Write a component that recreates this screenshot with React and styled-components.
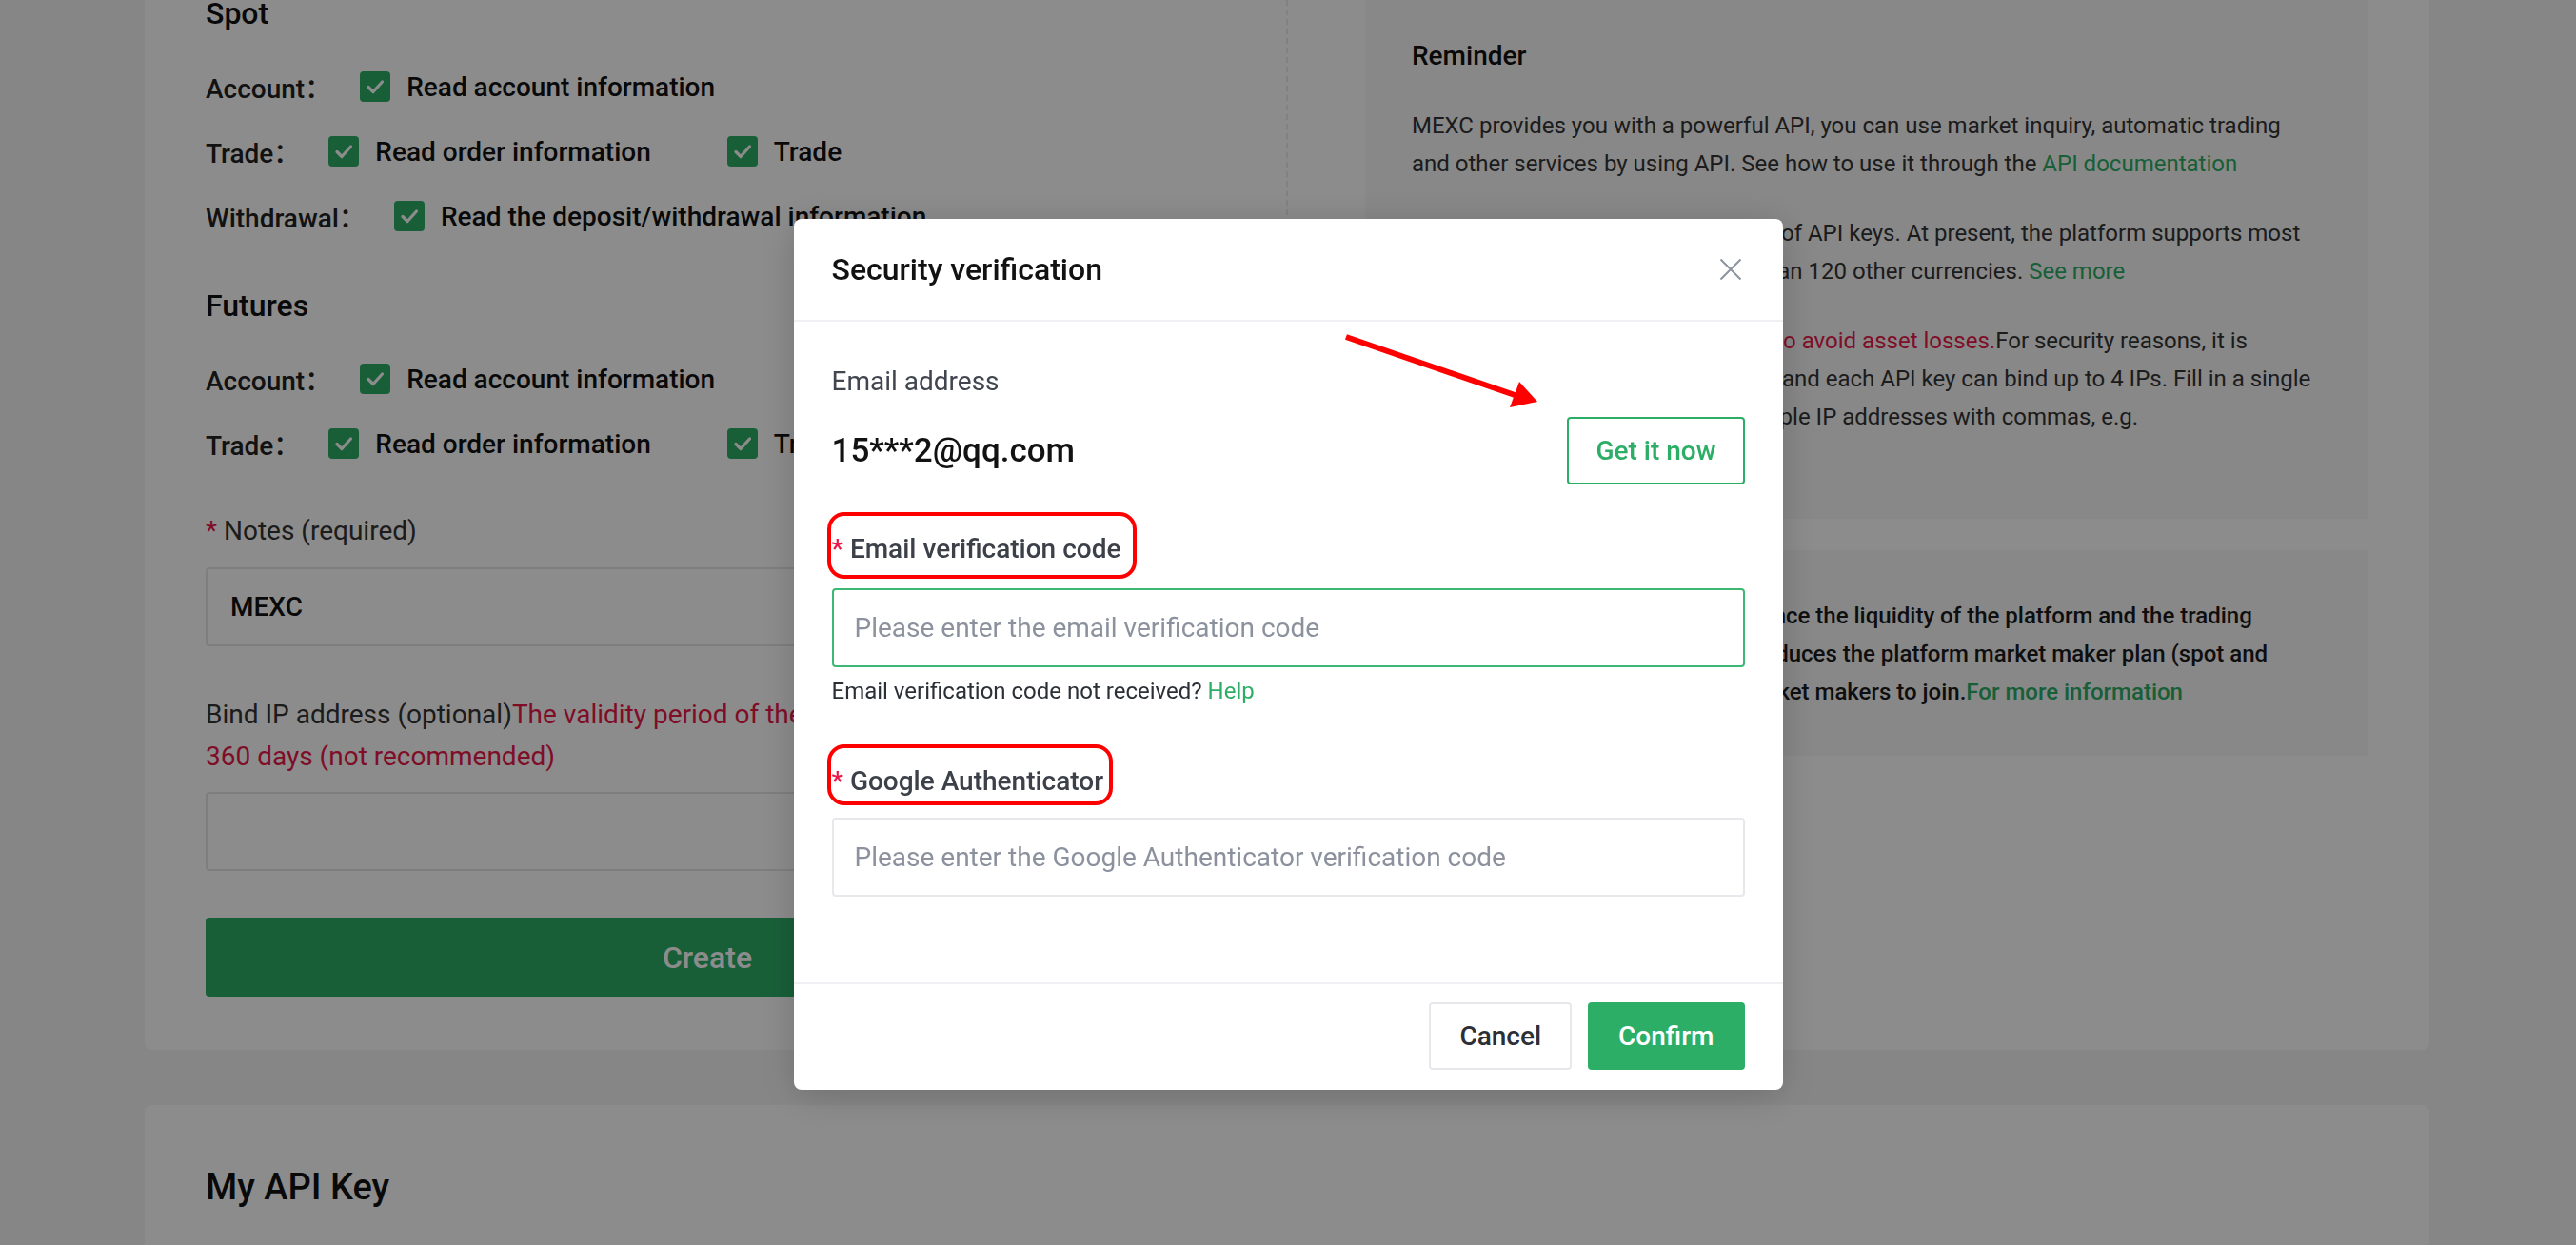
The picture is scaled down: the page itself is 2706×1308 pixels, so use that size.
import styled, { createGlobalStyle } from "styled-components";

const GREEN = "#2dae67";
const RED = "#e8194a";

const GlobalStyle = createGlobalStyle`
  * { box-sizing: border-box; }
  html, body { margin: 0; padding: 0; }
  body {
    background: #f5f5f5;
    font-family: Roboto, "Noto Sans CJK SC", sans-serif;
    color: #121212;
    overflow: hidden;
  }
`;

function Check() {
  return (
    <svg width="32" height="32" viewBox="0 0 32 32">
      <path
        d="M9 16.5 L14 21.5 L23.5 11"
        fill="none"
        stroke="#fff"
        strokeWidth="3.2"
        strokeLinecap="round"
        strokeLinejoin="round"
      />
    </svg>
  );
}

function Option({ children }) {
  return (
    <OptionItem>
      <CheckBox>
        <Check />
      </CheckBox>
      {children}
    </OptionItem>
  );
}

export default function App() {
  return (
    <>
      <GlobalStyle />
      <Page>
        <Card>
          <LeftCol>
            <Section>
              <SectionTitle>Spot</SectionTitle>
              <PermRow>
                <RowLabel>Account：</RowLabel>
                <Option>Read account information</Option>
              </PermRow>
              <PermRow>
                <RowLabel>Trade：</RowLabel>
                <Option>Read order information</Option>
                <Option>Trade</Option>
              </PermRow>
              <PermRow>
                <RowLabel>Withdrawal：</RowLabel>
                <Option>Read the deposit/withdrawal information</Option>
              </PermRow>
            </Section>
            <Section>
              <SectionTitle>Futures</SectionTitle>
              <PermRow>
                <RowLabel>Account：</RowLabel>
                <Option>Read account information</Option>
              </PermRow>
              <PermRow>
                <RowLabel>Trade：</RowLabel>
                <Option>Read order information</Option>
                <Option>Trade</Option>
              </PermRow>
            </Section>

            <Field>
              <FormLabel>
                <Star>*</Star> Notes (required)
              </FormLabel>
              <PageInput value="MEXC" readOnly />
            </Field>

            <Field $gap="50px">
              <FormLabel $tall>
                Bind IP address (optional)
                <Warn>
                  The validity period of the API Key not bound to IP is
                  <br />
                  360 days (not recommended)
                </Warn>
              </FormLabel>
              <PageInput />
            </Field>

            <CreateButton>Create</CreateButton>
          </LeftCol>

          <Divider />

          <RightCol>
            <InfoBox>
              <InfoTitle>Reminder</InfoTitle>
              <InfoText>
                MEXC provides you with a powerful API, you can use market inquiry, automatic trading
                <br />
                and other services by using API. See how to use it through the{" "}
                <Link>API documentation</Link>
              </InfoText>
              <InfoText>
                Each user can create up to 5 groups of API keys. At present, the platform supports most
                <br />
                mainstream currencies, and more than 120 other currencies. <Link>See more</Link>
              </InfoText>
              <InfoText>
                <WarnText>Please don't disclose your API Keys to avoid asset losses.</WarnText>
                For security reasons, it is
                <br />
                recommended to bind IP addresses, and each API key can bind up to 4 IPs. Fill in a single
                <br />
                IP address directly, or separate multiple IP addresses with commas, e.g.
                <br />
                192.168.1.1,192.168.1.2
              </InfoText>
            </InfoBox>
            <InfoBox $strong>
              <InfoText $first>
                In order to improve depth, and enhance the liquidity of the platform and the trading
                <br />
                experience for all users, MEXC introduces the platform market maker plan (spot and
                <br />
                futures). We sincerely welcome market makers to join.<Link>For more information</Link>
              </InfoText>
            </InfoBox>
          </RightCol>
        </Card>

        <KeyCard>
          <KeyTitle>My API Key</KeyTitle>
        </KeyCard>
      </Page>

      <Overlay>
        <Modal>
          <ModalHeader>
            <ModalTitle>Security verification</ModalTitle>
            <CloseButton aria-label="Close">
              <svg width="24" height="24" viewBox="0 0 24 24">
                <path d="M1.5 1.5 L22.5 22.5 M22.5 1.5 L1.5 22.5" stroke="#8b939c" strokeWidth="2" fill="none" />
              </svg>
            </CloseButton>
          </ModalHeader>

          <ModalBody>
            <FieldLabel>Email address</FieldLabel>
            <ValueRow>
              <EmailValue>15***2@qq.com</EmailValue>
              <OutlineButton>Get it now</OutlineButton>
            </ValueRow>

            <Marked $top="50px" $below="23px">
              <Star>*</Star> Email verification code
            </Marked>
            <ModalInput $active placeholder="Please enter the email verification code" />
            <HelpLine>
              Email verification code not received? <Link>Help</Link>
            </HelpLine>

            <Marked $top="61px" $right="-10px" $bottom="-7px">
              <Star>*</Star> Google Authenticator
            </Marked>
            <ModalInput placeholder="Please enter the Google Authenticator verification code" />
          </ModalBody>

          <ModalFooter>
            <GhostButton>Cancel</GhostButton>
            <PrimaryButton>Confirm</PrimaryButton>
          </ModalFooter>

          <Arrow width="230" height="100" viewBox="0 0 230 100">
            <line x1="10" y1="14" x2="190" y2="76" stroke="#ff0000" strokeWidth="6" />
            <polygon points="211,82 192,61 182,88" fill="#ff0000" />
          </Arrow>
        </Modal>
      </Overlay>
    </>
  );
}

const Page = styled.div`
  margin-top: -50px;
  padding: 0 154px 0 152px;
  display: flex;
  flex-direction: column;
  gap: 58px;
`;

const Card = styled.div`
  background: #fff;
  border-radius: 8px;
  padding: 40px 64px 56px;
  display: grid;
  grid-template-columns: 1fr 2px 1fr;
  column-gap: 81px;
`;

const LeftCol = styled.div`
  display: flex;
  flex-direction: column;
  padding-top: 4px;
`;

const Section = styled.div`
  display: flex;
  flex-direction: column;
  gap: 28px;

  & + & {
    margin-top: 54px;
  }
`;

const SectionTitle = styled.div`
  font-size: 32px;
  font-weight: 500;
  line-height: 40px;
  margin-bottom: 9px;
  color: #121212;
`;

const PermRow = styled.div`
  display: flex;
  align-items: center;
  height: 40px;
`;

const RowLabel = styled.span`
  font-size: 28px;
  font-weight: 500;
  color: #222;
  margin-right: 30px;
`;

const OptionItem = styled.span`
  display: inline-flex;
  align-items: center;
  gap: 17px;
  margin-right: 80px;
  font-size: 28px;
  font-weight: 500;
  color: #121212;
  white-space: nowrap;
`;

const CheckBox = styled.span`
  width: 32px;
  height: 32px;
  border-radius: 4px;
  background: ${GREEN};
  display: inline-flex;
`;

const Field = styled.div`
  display: flex;
  flex-direction: column;
  margin-top: ${(p) => p.$gap || "54px"};
`;

const FormLabel = styled.div`
  font-size: 28px;
  line-height: ${(p) => (p.$tall ? "44px" : "36px")};
  color: #333;
  margin-bottom: ${(p) => (p.$tall ? "15px" : "20px")};
  white-space: nowrap;
`;

const Star = styled.span`
  color: ${RED};
`;

const Warn = styled.span`
  color: ${RED};
`;

const PageInput = styled.input`
  height: 83px;
  border: 2px solid #e6e6e6;
  border-radius: 4px;
  padding: 0 24px;
  font-family: inherit;
  font-size: 28px;
  font-weight: 500;
  color: #121212;
  outline: none;
`;

const CreateButton = styled.button`
  margin-top: 49px;
  height: 83px;
  border: none;
  border-radius: 4px;
  background: ${GREEN};
  color: #fff;
  font-family: inherit;
  font-size: 32px;
  font-weight: 500;
`;

const Divider = styled.div`
  border-left: 2px dashed #ebebeb;
`;

const RightCol = styled.div`
  display: flex;
  flex-direction: column;
  gap: 33px;
  align-self: start;
`;

const InfoBox = styled.div`
  background: #f7f7f8;
  padding: 49px 49px 47px;
  color: ${(p) => (p.$strong ? "#1a1a1a" : "#333")};
  font-weight: ${(p) => (p.$strong ? 500 : 400)};
`;

const InfoTitle = styled.div`
  font-size: 28px;
  font-weight: 500;
  line-height: 40px;
  color: #121212;
`;

const InfoText = styled.p`
  margin: ${(p) => (p.$first ? "0" : "33px 0 0")};
  font-size: 24px;
  line-height: 40px;
  white-space: nowrap;
`;

const Link = styled.span`
  color: ${GREEN};
`;

const WarnText = styled.span`
  color: ${RED};
`;

const KeyCard = styled.div`
  background: #fff;
  border-radius: 8px;
  padding: 62px 64px;
  min-height: 400px;
`;

const KeyTitle = styled.div`
  font-size: 38px;
  font-weight: 500;
  line-height: 48px;
`;

const Overlay = styled.div`
  position: fixed;
  inset: 0;
  background: rgba(0, 0, 0, 0.45);
  display: flex;
  justify-content: center;
  align-items: flex-start;
  padding-top: 230px;
`;

const Modal = styled.div`
  position: relative;
  width: 1039px;
  background: #fff;
  border-radius: 8px;
  box-shadow: 0 6px 40px rgba(0, 0, 0, 0.18);
`;

const ModalHeader = styled.div`
  height: 108px;
  padding: 0 43px 0 40px;
  display: flex;
  align-items: center;
  justify-content: space-between;
  border-bottom: 2px solid #f0f0f5;
`;

const ModalTitle = styled.div`
  font-size: 32px;
  font-weight: 500;
  color: #121212;
`;

const CloseButton = styled.button`
  border: none;
  background: none;
  padding: 0;
  display: flex;
`;

const ModalBody = styled.div`
  padding: 45px 40px 90px;
  display: flex;
  flex-direction: column;
`;

const FieldLabel = styled.div`
  font-size: 28px;
  line-height: 36px;
  color: #41454f;
`;

const ValueRow = styled.div`
  margin-top: 19px;
  display: flex;
  align-items: center;
  justify-content: space-between;
`;

const EmailValue = styled.div`
  font-size: 35px;
  font-weight: 500;
  color: #121212;
`;

const BaseButton = styled.button`
  height: 71px;
  padding: 0 30px;
  border-radius: 4px;
  font-family: inherit;
  font-size: 28px;
  font-weight: 500;
`;

const OutlineButton = styled(BaseButton)`
  padding: 0 28px;
  border: 2px solid ${GREEN};
  background: #fff;
  color: ${GREEN};
`;

const Marked = styled.div`
  position: relative;
  align-self: flex-start;
  margin-top: ${(p) => p.$top};
  margin-bottom: ${(p) => p.$below || "20px"};
  font-size: 28px;
  line-height: 36px;
  font-weight: 500;
  color: #3c4049;

  &::after {
    content: "";
    position: absolute;
    top: -21px;
    bottom: ${(p) => p.$bottom || "-13px"};
    left: -5px;
    right: ${(p) => p.$right || "-17px"};
    border: 4px solid #ff0000;
    border-radius: 18px;
  }
`;

const ModalInput = styled.input`
  height: 83px;
  border: 2px solid ${(p) => (p.$active ? "#3cb874" : "#e6e8ec")};
  border-radius: 4px;
  padding: 0 22px;
  font-family: inherit;
  font-size: 28px;
  outline: none;

  &::placeholder {
    color: #8b929e;
  }
`;

const HelpLine = styled.div`
  margin-top: 9px;
  font-size: 24px;
  line-height: 32px;
  color: #2b2f36;
`;

const ModalFooter = styled.div`
  border-top: 2px solid #f0f0f5;
  padding: 19px 40px 21px;
  display: flex;
  justify-content: flex-end;
  gap: 17px;
`;

const GhostButton = styled(BaseButton)`
  border: 2px solid #e6e8ec;
  background: #fff;
  color: #2b2f36;
`;

const PrimaryButton = styled(BaseButton)`
  border: none;
  padding: 0 32px;
  background: ${GREEN};
  color: #fff;
`;

const Arrow = styled.svg`
  position: absolute;
  left: 570px;
  top: 110px;
  pointer-events: none;
`;
